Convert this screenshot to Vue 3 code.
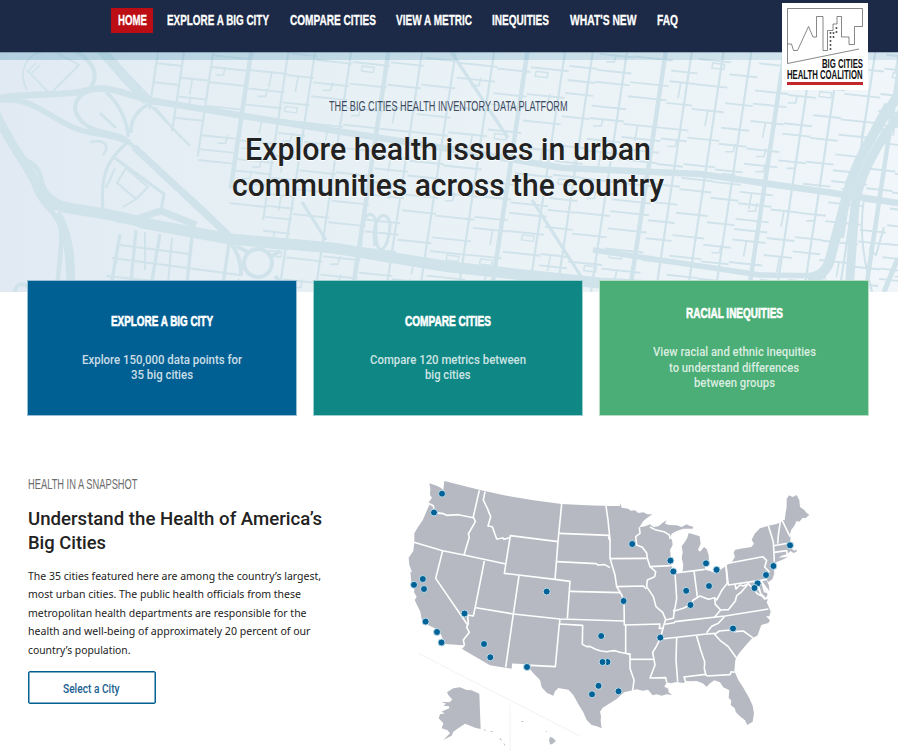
<script setup>
// Sets a line of text to an exact measure, condensing the letterforms.
const vFit = {
  mounted(el, { value }) {
    const natural = el.getBoundingClientRect().width
    el.style.transform = `scaleX(${value / natural})`
    el.style.marginRight = `${value - natural}px`
  }
}

const nav = [
  { label: 'HOME', w: 29, active: true },
  { label: 'EXPLORE A BIG CITY', w: 102 },
  { label: 'COMPARE CITIES', w: 86 },
  { label: 'VIEW A METRIC', w: 76 },
  { label: 'INEQUITIES', w: 57 },
  { label: "WHAT'S NEW", w: 66.5 },
  { label: 'FAQ', w: 21 }
]

const headline = [
  { t: 'Explore health issues in urban', w: 406 },
  { t: 'communities across the country', w: 432 }
]

const cards = [
  { tone: 'blue', title: 'EXPLORE A BIG CITY', w: 102, lines: [{ t: 'Explore 150,000 data points for', w: 160 }, { t: '35 big cities', w: 62 }] },
  { tone: 'teal', title: 'COMPARE CITIES', w: 86, lines: [{ t: 'Compare 120 metrics between', w: 156 }, { t: 'big cities', w: 45.5 }] },
  { tone: 'green', title: 'RACIAL INEQUITIES', w: 97, lines: [{ t: 'View racial and ethnic inequities', w: 163 }, { t: 'to understand differences', w: 130 }, { t: 'between groups', w: 81 }] }
]

const snapshotTitle = [
  { t: 'Understand the Health of America’s', w: 294 },
  { t: 'Big Cities', w: 78 }
]

const snapshotBody = [
  { t: 'The 35 cities featured here are among the country’s largest,', w: 293 },
  { t: 'most urban cities. The public health officials from these', w: 273 },
  { t: 'metropolitan health departments are responsible for the', w: 278.5 },
  { t: 'health and well-being of approximately 20 percent of our', w: 282.5 },
  { t: 'country’s population.', w: 102.5 }
]

const cities = [
  [442, 493.7], [434, 512.5], [414, 584.8], [422.8, 579], [424, 589], [464.5, 613.5], [546.7, 591.6],
  [425.6, 621.6], [437, 632], [441.5, 642.5], [484, 644], [490.3, 657.3], [527, 667], [601.2, 636],
  [607.5, 662], [602.5, 662], [598.5, 685.8], [592, 694.3], [618.5, 691.3], [632.2, 544], [670.4, 560.6],
  [673.3, 571.5], [706, 563.3], [716.6, 569.8], [709, 586], [686.2, 590.8], [690.5, 605], [623.6, 601],
  [660.3, 637.6], [733, 628.5], [790, 545.3], [773.4, 566], [766, 575], [757.6, 583.4], [754.5, 588]
]

const outline = 'M88 55L110 62L122 68L130 75L133 48L240 75L320 92L400 106L485 117L560 121L630 123L660 123L661 114L665 128L685 131L692 137L705 136L715 144L730 142L742 148L757 148L745 156L730 168L718 187L735 184L750 178L760 186L775 184L790 172L800 166L795 176L808 180L830 181L845 186L860 178L868 182L880 185L878 191L850 191L830 198L815 206L811 218L816 225L818 240L810 255L812 270L808 290L818 312L825 324L838 324L848 318L850 300L845 280L848 262L845 244L855 230L862 218L866 204L885 209L899 214L902 236L894 254L900 260L912 246L920 252L926 270L927 284L918 296L914 314L930 318L945 325L960 316L978 302L996 290L1005 276L1001 262L1006 254L1030 250L1054 246L1062 236L1055 224L1064 206L1080 190L1105 182L1130 177L1144 170L1148 164L1154 166L1156 150L1160 125L1160 102L1167 91L1178 96L1190 90L1198 106L1200 126L1212 134L1220 144L1228 149L1216 160L1208 158L1198 170L1190 168L1182 184L1174 194L1170 207L1172 222L1168 234L1176 243L1174 251L1184 257L1189 253L1190 260L1180 264L1172 258L1162 267L1145 272L1136 278L1164 275L1150 283L1122 295L1121 307L1123 325L1117 343L1105 351L1100 346L1107 362L1108 378L1102 370L1092 356L1086 348L1090 368L1103 388L1098 398L1084 384L1078 362L1070 352L1072 370L1082 390L1092 404L1104 403L1100 412L1108 430L1112 440L1108 454L1098 454L1110 466L1105 474L1084 480L1072 512L1058 518L1040 538L1028 552L1015 568L1006 585L1003 618L1015 645L1030 668L1048 700L1058 722L1062 745L1058 770L1042 780L1035 766L1018 752L1008 742L1004 730L992 720L994 707L986 698L988 676L970 667L960 652L943 646L930 655L920 665L908 655L890 648L870 649L858 648L850 654L830 651L812 655L800 652L793 665L805 671L806 682L816 690L800 688L785 692L770 688L758 691L744 674L728 677L710 673L698 676L672 682L650 702L630 715L608 728L600 740L603 754L602 770L605 790L590 784L575 780L560 765L550 742L535 718L520 690L505 674L475 669L465 679L460 692L440 683L425 667L420 645L400 625L388 610L370 600L336 598L335 611L270 601L185 551L190 541L133 537L128 520L120 503L105 490L88 482L65 463L61 440L50 418L44 405L50 395L42 382L44 366L34 352L31 320L36 322L28 300L26 278L40 258L43 232L43 205L54 186L68 166L80 138L88 120L85 113L96 98L90 90L91 72Z'

const borders = [
  'M85 115L100 122L103 143L130 146L140 151L175 149L220 158',
  'M238 76L220 155L226 170L205 207L208 216L192 270',
  'M42 232L128 257L192 270L318 297',
  'M255 80L250 105L262 130L272 155L264 183L277 185L290 222L309 219L312 223L328 218',
  'M331 212L474 230L465 343L313 325Z', 'M485 117L474 230', 'M478 205L628 211',
  'M471 290L588 296L594 300L614 299L630 308', 'M465 343L510 349L502 460', 'M357 332L340 447L317 607',
  'M253 288L225 430L220 453L203 450L205 475L200 487L208 502L190 525L193 540L185 550',
  'M128 257L107 340L203 480', 'M228 428L340 447L480 462L672 468',
  'M480 463L478 477L466 605L336 598', 'M478 477L548 481L547 538L560 545L570 544L585 552L600 557L620 560L632 558L645 557L660 562L690 568',
  'M510 379L662 383', 'M618 123L624 165L630 225L630 280L645 330L650 365L665 390L672 410L673 480L677 480L677 565L690 568',
  'M628 212L626 220L630 226', 'M630 281L740 280', 'M648 365L730 363L739 372',
  'M718 187L720 205L707 215L710 240L727 247L740 264L742 280L750 305L767 320L764 335L742 345L740 365L760 395L768 425L788 442L797 463L790 485L782 518L768 546L758 562L765 600L750 639L797 638L800 652',
  'M750 305L812 302', 'M825 324L830 400L825 430L820 440', 'M882 317L892 395', 'M825 324L885 317L914 313',
  'M797 465L820 460L823 438L850 430L870 420L880 405L900 393L925 403L944 398L950 405L966 375L982 355L978 302',
  'M978 302L985 360L1102 343', 'M985 295L1088 275L1100 286L1094 306L1107 320L1098 338',
  'M1105 182L1112 205L1120 230L1123 290', 'M1141 170L1135 210L1133 236', 'M1145 163L1170 215',
  'M1120 242L1168 234', 'M1122 262L1160 257L1162 270', 'M944 398L946 418L962 435L985 434L1006 408L1010 392L1024 381L1042 360',
  'M1005 358L1008 372L1020 360L1030 363L1045 356L1060 372L1072 386L1092 396', 'M1084 346L1094 380L1106 382',
  'M795 478L823 473L825 470L975 453L1105 432', 'M962 435L944 456', 'M784 522L920 507L945 505', 'M973 455L955 475L935 484L920 503',
  'M943 509L958 498L995 495L1004 500L1030 498L1058 518', 'M943 507L960 526L985 545L1010 580',
  'M830 518L828 585L833 650', 'M890 513L902 555L914 590L913 612L918 630', 'M857 650L852 636L916 628L922 633L990 629L994 620L1004 622',
  'M690 583L760 583', 'M675 480L780 477L778 490L792 490', 'M690 565L690 610L702 645L698 678', 'M750 186L765 194L792 200L808 210L811 222'
]

// Street network of the banner: a skewed grid with irregular blocks.
let seed = 17
const rnd = () => (seed = (seed * 16807) % 2147483647) / 2147483647
const streets = []
const cols = []
for (let x = 158; x < 960; x += 26 + rnd() * 14) cols.push(x)
const colX = (c, y) => c - (y - 52) * 0.15
const rowY = (y, x) => y + (x - 150) * 0.105
const diagonal = (y) => 100 + (y - 52) * 0.75
for (let i = 0; i < cols.length - 1; i++) {
  const c = cols[i]
  const top = 52
  let end = 292
  if (c < 290) end = 60 + (c - 100) * 0.85
  streets.push({ d: `M${c} ${top}L${colX(c, end)} ${end}`, w: i % 4 === 3 ? 4.5 : 2.2 })
  for (let y = -40; y < 292; y += 10 + rnd() * 20) {
    const x1 = colX(c, y)
    const x2 = colX(cols[i + 1], y)
    const y1 = rowY(y, x1)
    if (y1 < 52 || y1 > 292 || x1 < diagonal(y1) + 8) continue
    streets.push({ d: `M${x1} ${y1}L${x2} ${rowY(y, x2)}`, w: 1.9 })
    const k = rnd()
    const mid = x1 + (x2 - x1) * (0.3 + rnd() * 0.4)
    if (k < 0.15) streets.push({ d: `M${mid} ${y1}l-2 8h-8`, w: 1.6 })
    else if (k < 0.3) streets.push({ d: `M${mid} ${y1 + 1}l-3 16`, w: 1.7 })
    else if (k < 0.36) streets.push({ d: `M${mid - 7} ${y1 + 4}l12 1.5l-1 5l-12 -1.5z`, w: 1.4 })
  }
}
const roads = [
  { d: 'M101 50L124 76L148 101', w: 10 }, { d: 'M148 103L190 146M155 107L181 138', w: 1.8 },
  { d: 'M0 98C30 92 70 97 92 89C110 86 128 95 148 100L250 117L330 130L450 149L563 168L700 174L833 193L898 203', w: 6.5 },
  { d: 'M0 100C32 98 42 112 70 126C92 137 106 131 128 142', w: 5.5 },
  { d: 'M124 138L200 206L231 236', w: 4 },
  { d: 'M134 147L228 235', w: 7 }, { d: 'M-4 113C10 146 24 158 36 184C42 203 53 207 59 218C68 235 72 260 70 292', w: 9 },
  { d: 'M57 211C66 235 58 263 57 292', w: 4.5 }, { d: 'M50 204C80 212 110 212 143 223L230 239L333 248L450 267L600 283L898 300', w: 11 },
  { d: 'M104 213C128 228 147 214 161 211L196 225', w: 7 }, { d: 'M14 152C30 166 38 160 42 184C48 200 60 202 70 207', w: 5 },
  { d: 'M52 50L79 65L50 94L27 70M48 50C24 53 18 73 27 90', w: 1.8 }, { d: 'M29 70l7 -7M32 73l8 -8', w: 1.5 },
  { d: 'M75 50C94 63 99 74 91 87M91 90C78 94 70 106 79 118C89 133 111 131 124 138', w: 4 },
  { d: 'M106 92C120 104 128 124 128 137M148 105C137 110 130 121 131 133', w: 3.5 },
  { d: 'M100 113L116 128M90 142c16 -3 20 4 13 13', w: 2.5 },
  { d: 'M130 140C106 160 100 176 103 211M112 156L164 194L161 211', w: 3 },
  { d: 'M115 168l-9 20M126 168L148 187L136 199L117 183zM136 199l-13 8', w: 2 },
  { d: 'M120 234L110 292M136 230L130 292M160 234L150 292M192 236L186 292M230 236L222 292', w: 3.4 },
  { d: 'M112 258L240 275M106 276L220 288M120 245L190 254M145 232V270M172 238L168 284', w: 2 },
  { d: 'M230 242Q242 258 241 276M236 246L248 252M280 251L269 258M240 280l-9 8M275 276l10 11', w: 4 },
  { d: 'M244 263a14 14 0 1 0 28 0a14 14 0 1 0 -28 0', w: 4 },
  { d: 'M302 202L326 240M532 200L584 281M450 50L508 138', w: 3.2 },
  { d: 'M361 246C360 208 376 208 376 226C374 262 389 253 390 224C387 207 370 216 375 246', w: 3 },
  { d: 'M593 250L660 260L760 275L826 276', w: 5.5 },
  { d: 'M902 90Q862 147 850 184L829 263Q823 277 808 278', w: 10 },
  { d: 'M902 112Q862 162 855 205L849 292', w: 9 }, { d: 'M886 103Q859 149 850 190L843 238', w: 2.4 },
  { d: 'M864 198C858 237 866 268 872 292M877 225l-7 25l6 5l8 -28', w: 2 }, { d: 'M898 258L884 292', w: 5 },
  { d: 'M15 292C16 283 24 282 29 288', w: 4 }
]
</script>

<template>
  <div class="page">
    <header class="topbar">
      <nav class="nav">
        <a v-for="n in nav" :key="n.label" class="nav-link" :class="{ active: n.active }"><span v-fit="n.w" class="fit">{{ n.label }}</span></a>
      </nav>
      <div class="logo">
        <svg class="skyline" viewBox="0 0 76 57" width="76" height="57">
          <path d="M.5 55.5V.5H75.5V18.5H67.5V36.5H62V29H54.5V8.5H50V16H46V22.5H40.5V42.5H36V8.5H29.5V29H26L21.5 18.5L10.5 42.5H6.5L4.5 36H.5M.5 55.5L72 41" />
          <path class="windows" d="M43.5 24V43M46.5 24V30M49.5 19V25" />
        </svg>
        <div class="logo-text">
          <div><span v-fit="41" class="fit">BIG CITIES</span></div>
          <div><span v-fit="75.5" class="fit">HEALTH COALITION</span></div>
        </div>
        <div class="logo-rule"></div>
      </div>
    </header>

    <section class="hero">
      <svg class="streets" viewBox="0 52 898 240" width="898" height="240">
        <path v-for="(s, i) in streets" :key="'s' + i" :d="s.d" :stroke-width="s.w" />
        <path v-for="(s, i) in roads" :key="'r' + i" :d="s.d" :stroke-width="s.w" />
        <path class="island" d="M54 210l6 1l-4 3z" />
      </svg>
      <div class="hero-copy">
        <p class="eyebrow"><span v-fit="238.5" class="fit">THE BIG CITIES HEALTH INVENTORY DATA PLATFORM</span></p>
        <h1><span v-for="l in headline" :key="l.t" class="row"><span v-fit="l.w" class="fit">{{ l.t }}</span></span></h1>
      </div>
    </section>

    <section class="cards">
      <a v-for="c in cards" :key="c.title" class="card" :class="c.tone">
        <h2><span v-fit="c.w" class="fit">{{ c.title }}</span></h2>
        <p><span v-for="l in c.lines" :key="l.t" class="row"><span v-fit="l.w" class="fit">{{ l.t }}</span></span></p>
      </a>
    </section>

    <section class="snapshot">
      <div class="copy">
        <p class="eyebrow gray"><span v-fit="109.5" class="fit">HEALTH IN A SNAPSHOT</span></p>
        <h3><span v-for="l in snapshotTitle" :key="l.t" class="row"><span v-fit="l.w" class="fit">{{ l.t }}</span></span></h3>
        <p class="body"><span v-for="l in snapshotBody" :key="l.t" class="row"><span v-fit="l.w" class="fit">{{ l.t }}</span></span></p>
        <button class="select"><span v-fit="56.5" class="fit">Select a City</span></button>
      </div>
      <svg class="map" viewBox="0 0 1260 858" width="420" height="286">
        <path class="land" :d="outline" />
        <path class="land" d="M141 682L160 670L180 667L200 675L215 676L238 686L242 792L225 788L205 780L195 776L180 786L160 800L155 812L130 825L150 805L143 796L125 790L130 775L116 760L120 748L135 745L124 740L148 730L147 724L130 722L138 716L124 710L148 712L157 704L145 690Z" />
        <path class="land" d="M450 816L458 818L468 828L456 838L450 838L447 826ZM364 768h6v3h-6zM437 797l5 3l-3 2zM272 798h5v3h-5zM298 822l4 -2l4 8zM310 835l5 2v6zM252 792l6 4l-4 2z" />
        <path v-for="(b, i) in borders" :key="i" class="border" :d="b" />
        <path class="inset" d="M55 565L540 813M330 720V858" />
        <circle v-for="(c, i) in cities" :key="'c' + i" class="city" :cx="(c[0] - 400) * 3" :cy="(c[1] - 465) * 3" r="10.5" />
      </svg>
    </section>
  </div>
</template>

<style>
body {
  background: #fff;
  overflow: hidden;
}
</style>

<style scoped>
.page {
  width: 898px;
  height: 751px;
  overflow: hidden;
  background: #fff;
  font-family: Roboto, sans-serif;
  color: #222;
}
h1, h2, h3, p {
  margin: 0;
}
.fit {
  display: inline-block;
  white-space: nowrap;
  transform-origin: left center;
}
.row {
  display: block;
}
.topbar {
  position: relative;
  z-index: 2;
  height: 52px;
  background: #1c2a47;
}
.nav {
  display: flex;
  padding: 8px 0 0 111.3px;
  gap: 7.4px;
}
.nav-link {
  height: 25px;
  box-sizing: border-box;
  padding: 0 6.5px;
  font: bold 15.5px/23px "Liberation Sans Narrow", "Liberation Sans", sans-serif;
  color: #fff;
  -webkit-text-stroke: 0.3px #fff;
}
.nav-link.active {
  background: #bb0d13;
}
.logo {
  position: absolute;
  left: 781.7px;
  top: 3px;
  width: 86.5px;
  height: 87px;
  box-sizing: border-box;
  padding: 5px 5.5px;
  background: #fff;
}
.skyline {
  display: block;
}
.skyline path {
  fill: none;
  stroke: #555;
  stroke-width: 0.7;
}
.skyline .windows {
  stroke-width: 1.6;
  stroke-dasharray: 2 2;
}
.logo-text {
  margin-top: -6px;
  text-align: right;
  font: bold 12px/10.5px "Liberation Sans Narrow", "Liberation Sans", sans-serif;
  color: #111;
}
.logo-text .fit {
  vertical-align: top;
}
.logo-rule {
  margin-top: 1.7px;
  height: 3px;
  background: #c1272d;
}
.hero {
  position: relative;
  height: 240px;
  background: linear-gradient(90deg, #e1eaf3 0, #e4eef4 20%, #e8f1f5 45%, #f0f6f9 100%);
}
.hero::after {
  content: "";
  position: absolute;
  left: 0;
  right: 0;
  top: 0;
  height: 8px;
  border-top: 1px solid rgba(50, 80, 110, 0.35);
  box-sizing: border-box;
  background: linear-gradient(90deg, rgba(110, 168, 195, 0.4), rgba(110, 168, 195, 0.2));
}
.streets {
  position: absolute;
  left: 0;
  top: 0;
}
.streets path {
  fill: none;
  stroke: #d0e2ea;
  stroke-linejoin: round;
}
.streets .island {
  fill: #e4edf4;
  stroke: none;
}
.hero-copy {
  position: relative;
  padding: 43.5px 2.5px 0 0;
  text-align: center;
}
.eyebrow {
  font: 14px/20px "Liberation Sans Narrow", "Liberation Sans", sans-serif;
  color: #3d4a5e;
}
h1 {
  margin-top: 16.5px;
  font-size: 31.5px;
  line-height: 36.4px;
  font-weight: 500;
  text-shadow: 0 1px 1px #fff;
}
h1 .row {
  height: 36.4px;
}
.cards {
  position: relative;
  display: grid;
  grid-template-columns: repeat(3, 270px);
  gap: 16px;
  margin-top: -12px;
  padding-left: 27px;
}
.card {
  height: 135.5px;
  box-sizing: border-box;
  border: 1px solid rgba(255, 255, 255, 0.6);
  padding-bottom: 1.5px;
  display: flex;
  flex-direction: column;
  align-items: center;
  justify-content: center;
  gap: 20.8px;
  text-align: center;
}
.blue {
  background-color: #006093;
}
.teal {
  background-color: #0f8785;
}
.green {
  background-color: #4bae76;
}
.card h2 {
  font: bold 15px/20px "Liberation Sans Narrow", "Liberation Sans", sans-serif;
  color: #fff;
  -webkit-text-stroke: 0.6px #fff;
}
.card p {
  font-size: 13px;
  line-height: 15.7px;
  font-weight: 500;
  color: rgba(255, 255, 255, 0.8);
}
.card .row {
  height: 15.7px;
}
.snapshot {
  display: flex;
  padding: 49.5px 0 0 27.5px;
}
.copy {
  width: 372.5px;
  padding-top: 8.5px;
}
.eyebrow.gray {
  color: #6c6c6c;
}
h3 {
  margin-top: 13.5px;
  font-size: 19px;
  line-height: 24px;
  font-weight: 500;
}
.body {
  margin-top: 11.5px;
  font: 11.4px/18.6px "Noto Sans", sans-serif;
}
.body .row {
  height: 18.6px;
}
.select {
  display: block;
  margin-top: 11.5px;
  width: 128px;
  height: 33px;
  padding: 3px 0 0;
  border: 1px solid #005f93;
  box-shadow: inset 0 0 0 0.5px #005f93;
  border-radius: 2px;
  background: #fff;
  font: 500 12px/18px Roboto, sans-serif;
  color: #1b5f8f;
}
.map {
  display: block;
}
.land {
  fill: #b6b9c1;
}
.border {
  fill: none;
  stroke: #fff;
  stroke-width: 4.8;
  stroke-linejoin: round;
}
.inset {
  fill: none;
  stroke: #f2f2f2;
  stroke-width: 3;
}
.city {
  fill: #006297;
  stroke: #c3dbe7;
  stroke-width: 3;
}
</style>
